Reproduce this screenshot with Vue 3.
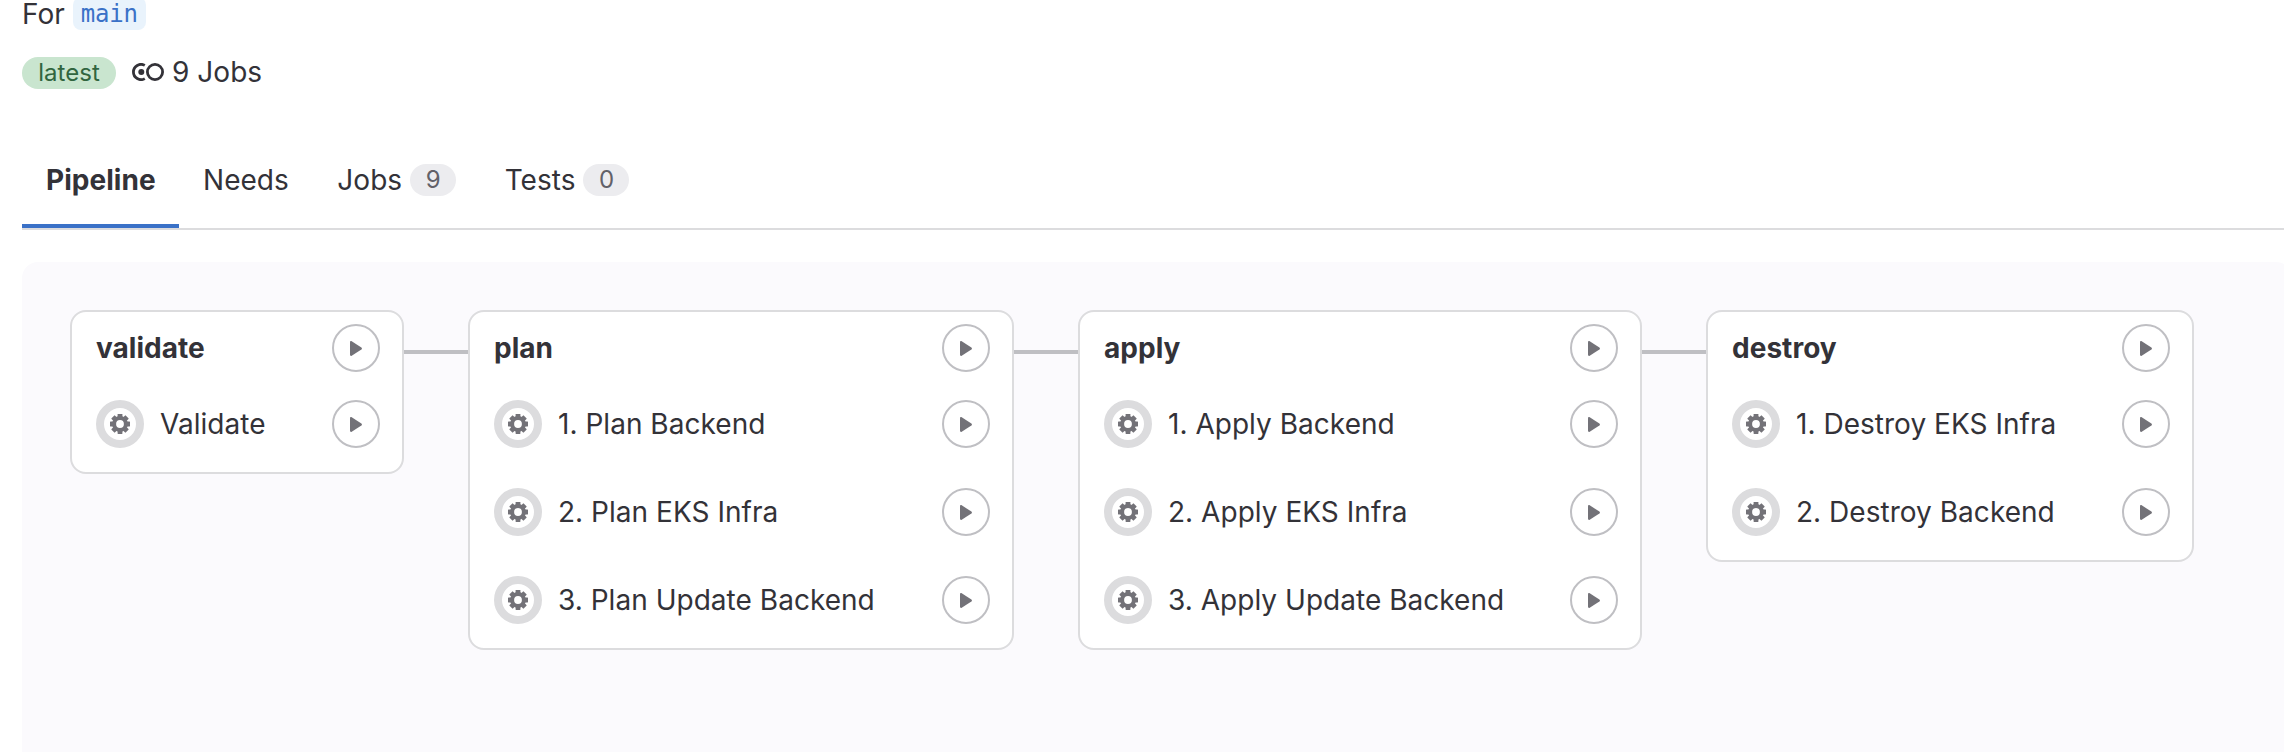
<script setup>
const stages = [
  { name: 'validate', cls: 'w1', jobs: ['Validate'] },
  { name: 'plan', cls: 'w2', jobs: ['1. Plan Backend', '2. Plan EKS Infra', '3. Plan Update Backend'] },
  { name: 'apply', cls: 'w3', jobs: ['1. Apply Backend', '2. Apply EKS Infra', '3. Apply Update Backend'] },
  { name: 'destroy', cls: 'w4', jobs: ['1. Destroy EKS Infra', '2. Destroy Backend'] },
]
const tabs = [
  { label: 'Pipeline', active: true },
  { label: 'Needs' },
  { label: 'Jobs', count: 9 },
  { label: 'Tests', count: 0 },
]
</script>

<template>
  <main class="page">
    <div class="ref-line"><span>For</span><code class="branch">main</code></div>
    <div class="meta">
      <span class="latest">latest</span>
      <svg class="link" viewBox="0 0 32 18" fill="none">
        <circle cx="23" cy="9" r="7.6" stroke="#333238" stroke-width="2.8" />
        <path d="M12.8 2.4A7.6 7.6 0 1 0 12.8 15.6" stroke="#333238" stroke-width="2.8" />
        <circle cx="9.3" cy="9" r="3" fill="#333238" />
      </svg>
      <span class="jobs-total">9 Jobs</span>
    </div>
    <nav class="tabs">
      <a v-for="t in tabs" :key="t.label" class="tab" :class="{ active: t.active }">
        <span>{{ t.label }}</span><span v-if="t.count !== undefined" class="count">{{ t.count }}</span>
      </a>
    </nav>
    <section class="graph">
      <template v-for="(s, i) in stages" :key="s.name">
        <div v-if="i" class="connector"></div>
        <article class="stage" :class="s.cls">
          <header class="row head">
            <h3>{{ s.name }}</h3>
            <button class="play"><svg viewBox="0 0 12 15"><path d="M0 1.2C0 .3.9-.2 1.7.3L11.4 6.6C12.1 7.1 12.1 7.9 11.4 8.4L1.7 14.7C.9 15.2 0 14.7 0 13.8Z" fill="#737278" /></svg></button>
          </header>
          <div v-for="j in s.jobs" :key="j" class="row job">
            <span class="status">
              <svg viewBox="-10 -10 20 20" fill="#737278">
                <circle r="5.9" fill="none" stroke="#737278" stroke-width="4" />
                <rect v-for="a in [0, 90, 180, 270]" :key="a" x="-2.4" y="-10" width="4.8" height="4" rx=".4" :transform="`rotate(${a})`" />
                <rect v-for="a in [45, 135, 225, 315]" :key="a" x="-2.4" y="-10" width="4.8" height="4" rx=".4" :transform="`rotate(${a})`" />
              </svg>
            </span>
            <span class="name">{{ j }}</span>
            <button class="play"><svg viewBox="0 0 12 15"><path d="M0 1.2C0 .3.9-.2 1.7.3L11.4 6.6C12.1 7.1 12.1 7.9 11.4 8.4L1.7 14.7C.9 15.2 0 14.7 0 13.8Z" fill="#737278" /></svg></button>
          </div>
        </article>
      </template>
    </section>
  </main>
</template>

<style>
body { background: #fff; overflow: hidden; }
</style>

<style scoped>
* { box-sizing: border-box; }
.page {
  height: 752px;
  padding-left: 22px;
  overflow: hidden;
  display: flex;
  flex-direction: column;
  color: #333238;
  font: 400 28px/32px Inter, "Noto Sans", sans-serif;
  letter-spacing: .03px;
  white-space: nowrap;
}
.ref-line { display: flex; height: 57px; margin-top: -3px; flex: none; }
.ref-line span { padding-top: 1px; }
.branch {
  height: 33px;
  margin-left: 8px;
  padding: 0 8px;
  border-radius: 8px;
  background: #e9f3fc;
  color: #3a71c7;
  font: 400 24px/35px "DejaVu Sans Mono", monospace;
  letter-spacing: -.2px;
}
.meta { display: flex; align-items: center; height: 32px; margin-top: 3px; flex: none; }
.latest {
  height: 32px;
  line-height: 31px;
  width: 94px;
  text-align: center;
  border-radius: 16px;
  background: #c9e5cf;
  color: #316540;
  font-size: 24px;
}
.link { width: 32px; height: 18px; margin: -3px 0 0 16px; }
.jobs-total { margin: -3px 0 0 8px; }
.tabs { display: flex; margin-top: 45px; border-bottom: 2px solid #dcdcde; flex: none; height: 96px; }
.tab { display: flex; align-items: center; padding: 0 24px 2px; height: 94px; }
.tab + .tab { padding-right: 24.5px; }
.tab.active { width: 157px; padding: 2px 0 0 24px; font-weight: 650; border-bottom: 4px solid #3a71c7; }
.count {
  margin-left: 8px;
  width: 46px;
  height: 32px;
  border-radius: 16px;
  background: #ececef;
  color: #626168;
  font-size: 24px;
  line-height: 31px;
  text-align: center;
}
.graph {
  display: flex;
  align-items: flex-start;
  margin: 32px -8px 0 0;
  padding: 48px;
  flex: 1;
  background: #fbfafd;
  border-radius: 16px 16px 0 0;
}
.stage {
  flex: none;
  padding: 12px 22px 0 24px;
  border: 2px solid #dcdcde;
  border-radius: 16px;
  background: #fff;
}
.w1 { width: 334px; height: 164px; }
.w2 { width: 546px; height: 340px; }
.w3 { width: 564px; height: 340px; }
.w4 { width: 488px; height: 252px; }
.connector { flex: none; width: 64px; height: 4px; margin-top: 40px; background: #bfbfc3; }
.row { display: flex; align-items: center; height: 48px; }
.head { justify-content: space-between; margin-bottom: 28px; }
.job + .job { margin-top: 40px; }
h3 { margin: 0; font-size: 28px; line-height: 32px; font-weight: 650; }
.play {
  flex: none;
  width: 48px;
  height: 48px;
  padding: 0;
  border: 2px solid #bfbfc3;
  border-radius: 50%;
  background: #fff;
  display: flex;
  align-items: center;
  justify-content: center;
}
.play svg { width: 12px; height: 15px; }
.status {
  flex: none;
  width: 48px;
  height: 48px;
  border: 8px solid #dcdcde;
  border-radius: 50%;
  display: flex;
  align-items: center;
  justify-content: center;
}
.status svg { width: 20px; height: 20px; }
.name { flex: 1; padding-left: 16px; }
</style>
